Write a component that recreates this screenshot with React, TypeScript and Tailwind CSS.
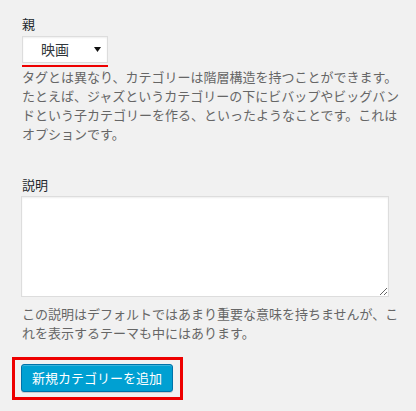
export default function App() {
  return (
    <div
      className="min-h-[411px] w-[416px] bg-[#f1f1f1] pl-[22px] pt-[14px] text-[13px] leading-[19px] text-[#23282d]"
      style={{ fontFamily: '"Noto Sans CJK JP", "Noto Sans", sans-serif' }}
    >
      <div className="w-[387px]">
        <label className="block">親</label>

        <div className="mt-[3px] w-[86px]">
          <div className="flex h-[27px] w-[86px] items-center justify-between border border-[#dddddd] bg-white pr-[6px] pl-[18px] text-[14px] text-[#32373c] shadow-[inset_0_1px_2px_rgba(0,0,0,0.07)]">
            <span>映画</span>
            <svg width="7" height="5" viewBox="0 0 7 5" aria-hidden="true">
              <path d="M0 0h7L3.5 5z" fill="#111" />
            </svg>
          </div>
          <div className="mt-[2px] h-[2px] w-[86px] bg-[#ee0000]" />
        </div>

        <p className="text-[#666]">
          タグとは異なり、カテゴリーは階層構造を持つことができます。たとえば、ジャズというカテゴリーの下にビバップやビッグバンドという子カテゴリーを作る、といったようなことです。これはオプションです。
        </p>

        <label className="mt-[32px] block">説明</label>
        <textarea className="mt-[2px] -ml-px block h-[101px] w-[368px] border border-[#dddddd] bg-white shadow-[inset_0_1px_2px_rgba(0,0,0,0.07)] outline-none" />

        <p className="mt-[7px] text-[#666]">
          この説明はデフォルトではあまり重要な意味を持ちませんが、これを表示するテーマも中にはあります。
        </p>

        <div className="mt-[15px] -ml-[10px] inline-block border-[3px] border-[#ee0000] pt-[4px] pr-[7px] pb-[5px] pl-[6px]">
          <button className="h-[28px] rounded-[3px] border border-[#0073aa] bg-[#00a0d2] px-[10px] text-[13px] leading-[26px] text-white shadow-[inset_0_1px_0_rgba(120,200,230,0.5),0_1px_0_rgba(0,0,0,0.15)]">
            新規カテゴリーを追加
          </button>
        </div>
      </div>
    </div>
  )
}
